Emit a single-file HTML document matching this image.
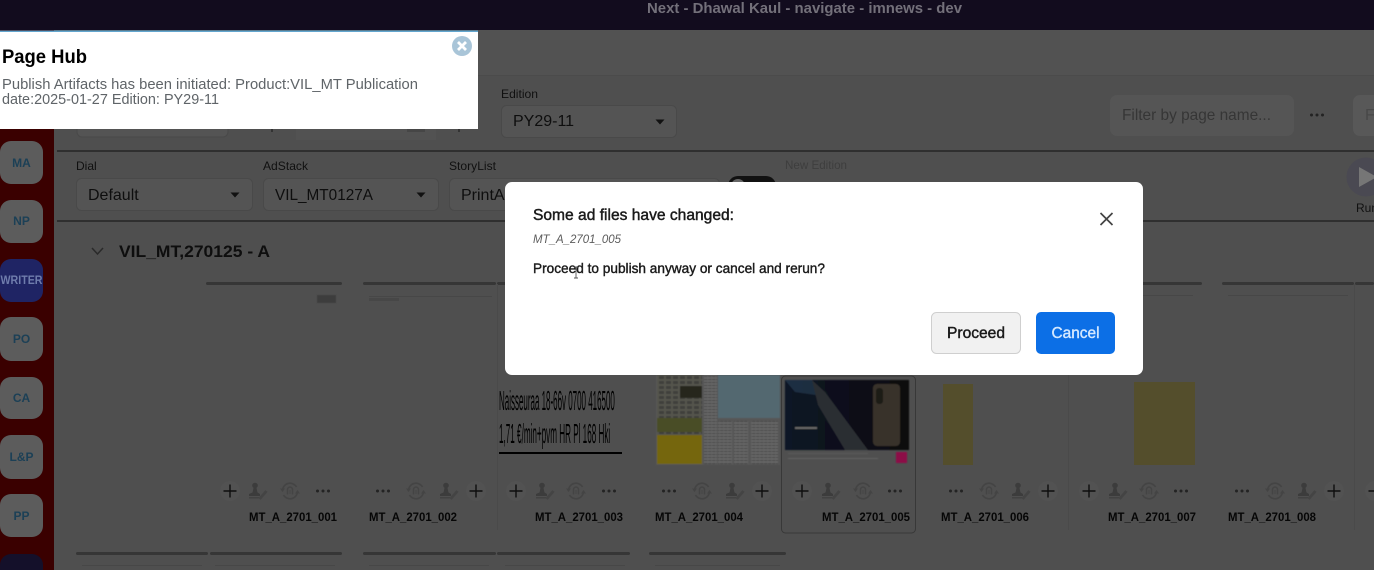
<!DOCTYPE html>
<html><head><meta charset="utf-8"><style>
html,body{margin:0;padding:0;background:#4f4f4f;width:1374px;height:570px;overflow:hidden}
svg{display:block;filter:blur(.35px)}
text{font-family:"Liberation Sans",sans-serif}
.l{font-size:12px;fill:#101010}
.v{font-size:16px;fill:#0e0e0e}
.t{font-size:12px;font-weight:bold;fill:#1c4056;text-anchor:middle}
.n{font-size:12px;font-weight:bold;fill:#060606}
.bar{fill:#363636}
.box{fill:#545454;stroke:#494949}
</style></head><body>
<svg width="1374" height="570" viewBox="0 0 1374 570" xmlns="http://www.w3.org/2000/svg">
<defs>
<filter id="b"><feGaussianBlur stdDeviation="0.6"/></filter>
<filter id="b2"><feGaussianBlur stdDeviation="0.2"/></filter>
<linearGradient id="ad" x1="0" y1="0" x2="1" y2="0"><stop offset="0" stop-color="#0e1526"/><stop offset="1" stop-color="#0b0b0e"/></linearGradient>
<pattern id="news" width="4" height="3" patternUnits="userSpaceOnUse"><rect width="4" height="3" fill="#666"/><rect y="1" width="3.500" height="1" fill="#474747"/></pattern>
<pattern id="news2" width="7" height="5" patternUnits="userSpaceOnUse"><rect width="7" height="5" fill="#55554e"/><rect x="1" y="1" width="5" height="3" fill="#40403a"/></pattern>
<symbol id="plus" width="28" height="28" viewBox="-14 -14 28 28"><circle r="10" fill="#525252"/><path d="M-6.500 0H6.500M0-6.500V6.500" stroke="#0e0e0e" stroke-width="1.400" fill="none"/></symbol>
<symbol id="stamp" width="28" height="28" viewBox="-14 -14 28 28"><circle cx="-2" cy="-5.500" r="2.800" fill="#3c3c3c"/><path d="M-3.500-3H-.5L.5 1.500 3 3V5H-8V3L-4.500 1.500Z" fill="#3c3c3c"/><path d="M-8 6H2V7.500H-8Z" fill="#424242"/><path d="M2.500 8 9.500 0" stroke="#444" stroke-width="2.800" fill="none"/></symbol>
<symbol id="sync" width="28" height="28" viewBox="-14 -14 28 28"><path d="M-7.500-.5A7.500 7.500 0 0 1 6.500-4M7.500.5A7.500 7.500 0 0 1-6.500 4" stroke="#444" stroke-width="1.600" fill="none"/><path d="M-10-2.500-7.500 1-5-2.500ZM10 2.500 7.500-1 5 2.500Z" fill="#444"/><path d="M-2.500 3.500V-1.500a2.500 2.500 0 0 1 5 0V3.500" stroke="#444" stroke-width="1.400" fill="none"/><path d="M0-1V3" stroke="#444"/></symbol>
<symbol id="dots" width="28" height="28" viewBox="-14 -14 28 28"><circle cx="-5.500" r="1.500" fill="#232323"/><circle r="1.500" fill="#232323"/><circle cx="5.500" r="1.500" fill="#232323"/></symbol>
<symbol id="caret" width="12" height="6" viewBox="0 0 12 6"><path d="M1.500 0.500H10.500L6 5.500Z" fill="#111"/></symbol>
</defs>

<rect width="1374" height="570" fill="#4f4f4f"/>
<rect width="1374" height="30" fill="#120c1e"/>
<text x="647" y="13" font-size="14.500" font-weight="bold" fill="#73707a" textLength="315" lengthAdjust="spacingAndGlyphs">Next - Dhawal Kaul - navigate - imnews - dev</text>

<rect x="0" y="30" width="1374" height="45" fill="#525252"/>
<rect x="54" y="75" width="1320" height="1" fill="#4b4b4b"/>

<!-- sidebar -->
<rect x="0" y="30" width="54" height="540" fill="#3a0000"/>
<rect x="0" y="141" width="43" height="43" rx="11" fill="#5c5c5c"/><text class="t" x="21.500" y="167">MA</text>
<rect x="0" y="200" width="43" height="43" rx="11" fill="#5c5c5c"/><text class="t" x="21.500" y="225">NP</text>
<rect x="0" y="259" width="43" height="43" rx="11" fill="#1f2464"/><text x="21.500" y="284" text-anchor="middle" font-size="12" font-weight="bold" fill="#6f7cac" textLength="42" lengthAdjust="spacingAndGlyphs">WRITER</text>
<rect x="0" y="317" width="43" height="44" rx="11" fill="#5c5c5c"/><text class="t" x="21.500" y="343">PO</text>
<rect x="0" y="377" width="43" height="42" rx="11" fill="#5c5c5c"/><text class="t" x="21.500" y="402">CA</text>
<rect x="0" y="435" width="43" height="44" rx="11" fill="#5c5c5c"/><text class="t" x="21.500" y="461">L&amp;P</text>
<rect x="0" y="494" width="43" height="43" rx="11" fill="#5c5c5c"/><text class="t" x="21.500" y="520">PP</text>
<rect x="0" y="554" width="43" height="30" rx="11" fill="#14102a"/>

<!-- toolbar row 1 -->
<rect x="77" y="100" width="151" height="37" rx="5" class="box"/>
<rect x="296" y="105" width="140" height="35" fill="#525252"/>
<rect x="407" y="120" width="18" height="12" fill="#464646"/>
<rect x="271" y="129" width="2" height="3" fill="#333"/><rect x="458" y="129" width="2" height="3" fill="#333"/>
<text class="l" x="501" y="98" textLength="37" lengthAdjust="spacingAndGlyphs">Edition</text>
<rect x="501.500" y="105.500" width="175" height="32" rx="5" class="box"/>
<text class="v" x="513" y="126">PY29-11</text>
<use href="#caret" x="654" y="119"/>
<rect x="1110" y="95" width="184" height="41" rx="7" fill="#555"/>
<text x="1122" y="120" font-size="16" fill="#363636" textLength="149" lengthAdjust="spacingAndGlyphs">Filter by page name...</text>
<use href="#dots" x="1303" y="101"/>
<rect x="1353" y="95" width="30" height="41" rx="7" fill="#585858"/>
<text x="1365" y="120" font-size="16" fill="#484848">F</text>
<rect x="57" y="150" width="1317" height="2" fill="#2f2f2f"/>

<!-- toolbar row 2 -->
<text class="l" x="76" y="170">Dial</text>
<rect x="76.500" y="178.500" width="176" height="32" rx="5" class="box"/>
<text class="v" x="88" y="200">Default</text>
<use href="#caret" x="229" y="192"/>
<text class="l" x="263" y="170" textLength="45" lengthAdjust="spacingAndGlyphs">AdStack</text>
<rect x="263.500" y="178.500" width="175" height="32" rx="5" class="box"/>
<text class="v" x="275" y="200" textLength="98" lengthAdjust="spacingAndGlyphs">VIL_MT0127A</text>
<use href="#caret" x="415" y="192"/>
<text class="l" x="449" y="170" textLength="47" lengthAdjust="spacingAndGlyphs">StoryList</text>
<rect x="449.500" y="178.500" width="270" height="32" rx="5" class="box"/>
<text class="v" x="461" y="200">PrintA</text>
<rect x="728" y="176" width="48" height="20" rx="10" fill="#111"/>
<circle cx="738" cy="186" r="7" fill="#666"/>
<text x="785" y="169" font-size="12" fill="#3e3e3e" textLength="62" lengthAdjust="spacingAndGlyphs">New Edition</text>
<circle cx="1366" cy="177" r="19.500" fill="#4a4952"/>
<path d="M1359 167 1377 177 1359 187Z" fill="#767676"/>
<text x="1356" y="212" font-size="12" fill="#111">Run</text>
<rect x="57" y="220" width="1317" height="2" fill="#2f2f2f"/>

<path d="M92 248 97.500 254 103 248" stroke="#2a2a2a" stroke-width="1.500" fill="none"/>
<text x="119" y="257" font-size="17" font-weight="bold" fill="#0e0e0e" textLength="151" lengthAdjust="spacingAndGlyphs">VIL_MT,270125 - A</text>

<!-- page top bars -->
<g class="bar">
<rect x="206" y="282" width="136" height="3" rx="1.500"/><rect x="363" y="282" width="133" height="3" rx="1.500"/><rect x="497" y="282" width="133" height="3" rx="1.500"/><rect x="649" y="282" width="133" height="3" rx="1.500"/><rect x="783" y="282" width="133" height="3" rx="1.500"/><rect x="936" y="282" width="133" height="3" rx="1.500"/><rect x="1070" y="282" width="132" height="3" rx="1.500"/><rect x="1222" y="282" width="132" height="3" rx="1.500"/><rect x="1355" y="282" width="19" height="3" rx="1.500"/>
<rect x="76" y="552" width="132" height="3" rx="1.500"/><rect x="210" y="552" width="132" height="3" rx="1.500"/><rect x="363" y="552" width="133" height="3" rx="1.500"/><rect x="497" y="552" width="133" height="3" rx="1.500"/><rect x="649" y="552" width="137" height="3" rx="1.500"/>
</g>
<!-- page header rules -->
<g fill="#474747">
<rect x="317" y="295" width="19" height="8" filter="url(#b)" fill="#3c3c3c"/>
<rect x="369" y="296" width="123" height="1"/><rect x="369" y="298" width="30" height="3"/>
<rect x="505" y="296" width="120" height="1"/><rect x="1078" y="295" width="115" height="1"/><rect x="1228" y="295" width="120" height="1"/>
<rect x="82" y="565" width="120" height="1"/><rect x="215" y="565" width="120" height="1"/><rect x="369" y="565" width="120" height="1"/><rect x="505" y="565" width="120" height="1"/><rect x="655" y="565" width="125" height="1"/>
</g>
<rect x="497" y="284" width="1" height="246" fill="#4a4a4a"/>
<rect x="1068" y="284" width="1" height="246" fill="#4a4a4a"/>
<rect x="1354" y="284" width="1" height="246" fill="#4a4a4a"/>

<!-- page 3 thumb -->
<g filter="url(#b2)" fill="#060606">
<text transform="translate(499 410) scale(.47 1.650)" font-size="17">Naisseuraa 18-66v 0700 416500</text>
<text transform="translate(499 443) scale(.478 1.650)" font-size="17">1,71 €/min+pvm HR Pl 168 Hki</text>
<rect x="499" y="452" width="123" height="2"/>
</g>

<!-- page 4 thumb -->
<g filter="url(#b)">
<rect x="656" y="375" width="124" height="90" fill="#565656"/>
<rect x="657" y="375" width="45" height="60" fill="url(#news2)"/>
<rect x="680" y="386" width="22" height="12" fill="#25261a"/>
<rect x="657" y="418" width="45" height="14" fill="#4a4e28"/>
<rect x="657" y="435" width="45" height="29" fill="#75660e"/>
<rect x="718" y="375" width="62" height="43" fill="#536770"/>
<rect x="704" y="375" width="13" height="89" fill="url(#news)"/>
<rect x="718" y="421" width="14" height="43" fill="url(#news)"/><rect x="734" y="421" width="14" height="43" fill="url(#news)"/><rect x="751" y="421" width="27" height="43" fill="url(#news)"/>
</g>

<!-- page 5 thumb -->
<g filter="url(#b)">
<rect x="785" y="380" width="124" height="70" fill="url(#ad)"/>
<path d="M785 380H812L822 396 795 392Z" fill="#23344a" opacity=".8"/>
<path d="M812 380 825 392 868 450H845L818 405Z" fill="#2c2d33"/>
<rect x="873" y="384" width="27" height="62" rx="4" fill="#38332a"/>
<rect x="876" y="388" width="7" height="16" rx="3" fill="#1d1b18"/>
<rect x="795" y="427" width="22" height="2" fill="#666"/>
<rect x="788" y="453" width="80" height="1" fill="#5a5a5a"/>
<rect x="788" y="458" width="90" height="1" fill="#626262"/>
<rect x="896" y="452" width="11" height="11" fill="#8c1046"/>
</g>
<rect x="781.500" y="376" width="134" height="157" rx="4" fill="none" stroke="#383838"/>

<!-- yellow pages -->
<rect x="943" y="384" width="30" height="81" fill="#544e2c"/>
<rect x="1134" y="382" width="61" height="83" fill="#544e2c"/>

<!-- action icons -->
<use href="#plus" x="216" y="477"/><use href="#stamp" x="243" y="477"/><use href="#sync" x="276" y="477"/><use href="#dots" x="309" y="477"/>
<use href="#dots" x="369" y="477"/><use href="#sync" x="402" y="477"/><use href="#stamp" x="434" y="477"/><use href="#plus" x="462" y="477"/>
<use href="#plus" x="502" y="477"/><use href="#stamp" x="530" y="477"/><use href="#sync" x="562" y="477"/><use href="#dots" x="595" y="477"/>
<use href="#dots" x="655" y="477"/><use href="#sync" x="688" y="477"/><use href="#stamp" x="720" y="477"/><use href="#plus" x="748" y="477"/>
<use href="#plus" x="788" y="477"/><use href="#stamp" x="816" y="477"/><use href="#sync" x="849" y="477"/><use href="#dots" x="881" y="477"/>
<use href="#dots" x="942" y="477"/><use href="#sync" x="975" y="477"/><use href="#stamp" x="1006" y="477"/><use href="#plus" x="1034" y="477"/>
<use href="#plus" x="1075" y="477"/><use href="#stamp" x="1103" y="477"/><use href="#sync" x="1135" y="477"/><use href="#dots" x="1167" y="477"/>
<use href="#dots" x="1228" y="477"/><use href="#sync" x="1261" y="477"/><use href="#stamp" x="1292" y="477"/><use href="#plus" x="1320" y="477"/>
<use href="#plus" x="1361" y="477"/>

<!-- page names -->
<text class="n" x="249" y="521" textLength="88" lengthAdjust="spacingAndGlyphs">MT_A_2701_001</text>
<text class="n" x="369" y="521" textLength="88" lengthAdjust="spacingAndGlyphs">MT_A_2701_002</text>
<text class="n" x="535" y="521" textLength="88" lengthAdjust="spacingAndGlyphs">MT_A_2701_003</text>
<text class="n" x="655" y="521" textLength="88" lengthAdjust="spacingAndGlyphs">MT_A_2701_004</text>
<text class="n" x="822" y="521" textLength="88" lengthAdjust="spacingAndGlyphs">MT_A_2701_005</text>
<text class="n" x="941" y="521" textLength="88" lengthAdjust="spacingAndGlyphs">MT_A_2701_006</text>
<text class="n" x="1108" y="521" textLength="88" lengthAdjust="spacingAndGlyphs">MT_A_2701_007</text>
<text class="n" x="1228" y="521" textLength="88" lengthAdjust="spacingAndGlyphs">MT_A_2701_008</text>

<!-- toast -->
<rect x="0" y="31" width="478" height="98" fill="#fff"/>
<rect x="0" y="30.500" width="478" height="1.500" fill="#62a6cf"/>
<circle cx="462" cy="46" r="10" fill="#a9c5d8"/>
<path d="M458 42 466 50M466 42 458 50" stroke="#fff" stroke-width="2.800"/>
<text x="2" y="63" font-size="19.500" font-weight="bold" fill="#000" textLength="85" lengthAdjust="spacingAndGlyphs">Page Hub</text>
<text x="2" y="89" font-size="14.500" fill="#5f6468" textLength="416" lengthAdjust="spacingAndGlyphs">Publish Artifacts has been initiated: Product:VIL_MT Publication</text>
<text x="2" y="104" font-size="14.500" fill="#5f6468" textLength="217" lengthAdjust="spacingAndGlyphs">date:2025-01-27 Edition: PY29-11</text>

<!-- dialog -->
<rect x="505" y="182" width="638" height="193" rx="7" fill="#fff"/>
<text x="533" y="220" font-size="15.500" fill="#1a1a1a" stroke="#1a1a1a" stroke-width=".45" textLength="201" lengthAdjust="spacingAndGlyphs">Some ad files have changed:</text>
<text x="533" y="243" font-size="11.500" font-style="italic" fill="#5c5c5c" textLength="88" lengthAdjust="spacingAndGlyphs">MT_A_2701_005</text>
<text x="533" y="273" font-size="14" fill="#1a1a1a" stroke="#1a1a1a" stroke-width=".4" textLength="292" lengthAdjust="spacingAndGlyphs">Proceed to publish anyway or cancel and rerun?</text>
<path d="M574 267H578M576 267V278M574 278H578" stroke="#555" stroke-width=".9" fill="none"/>
<path d="M1100.500 213 1112.500 225M1112.500 213 1100.500 225" stroke="#444" stroke-width="1.700"/>
<rect x="931.500" y="312.500" width="89" height="41" rx="5" fill="#f1f1f1" stroke="#cfcfcf"/>
<text x="947" y="338" font-size="16" fill="#1a1a1a" stroke="#1a1a1a" stroke-width=".45" textLength="58" lengthAdjust="spacingAndGlyphs">Proceed</text>
<rect x="1036" y="312" width="79" height="42" rx="5" fill="#0c6fe6"/>
<text x="1051.500" y="338" font-size="16" fill="#d4e8ff" stroke="#d4e8ff" stroke-width=".4" textLength="48" lengthAdjust="spacingAndGlyphs">Cancel</text>
</svg>
</body></html>
